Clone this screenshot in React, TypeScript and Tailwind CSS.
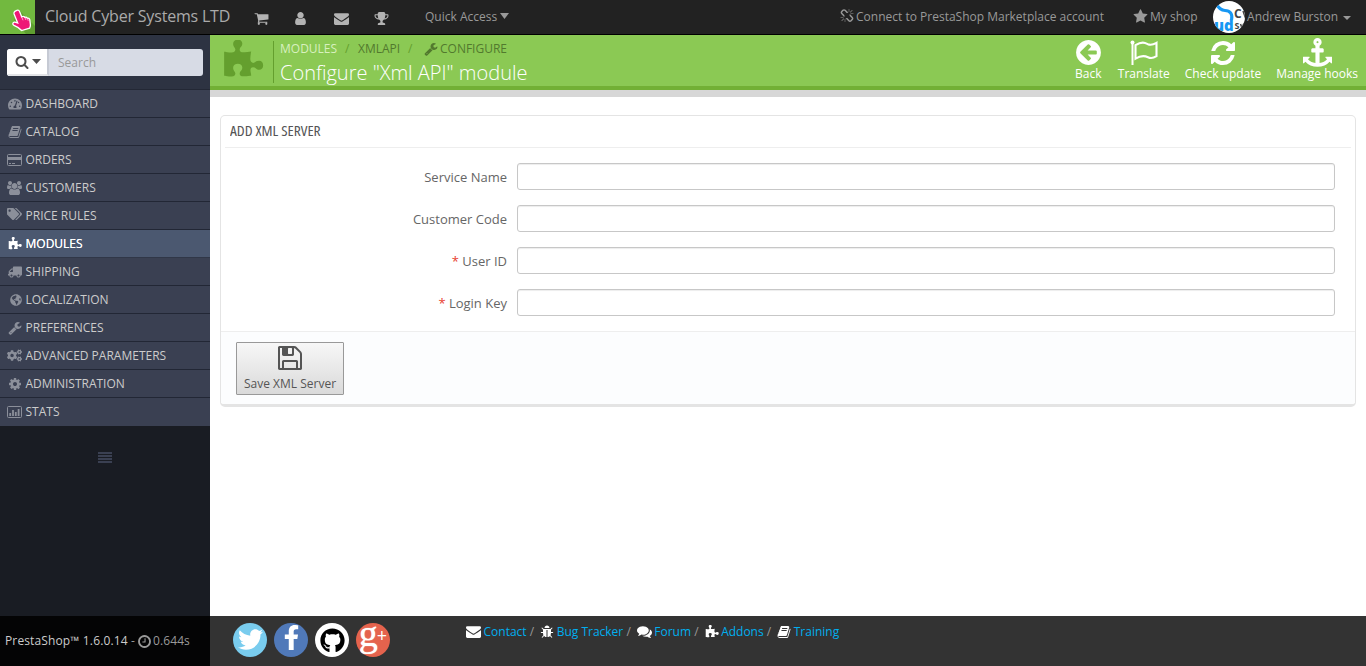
import React from "react";
import { FaCogs, FaFacebookF, FaGithub, FaGlobeAmericas, FaTachometerAlt, FaTags, FaTruck, FaTwitter } from "react-icons/fa";

const PATHS = {
  wrench: "M448 1472q0-26-19-45t-45-19-45 19-19 45 19 45 45 19 45-19 19-45zm644-420l-682 682q-37 37-90 37-52 0-91-37l-106-108q-38-36-38-90 0-53 38-91l681-681q39 98 114.5 173.5t173.5 114.5zm634-435q0 39-23 106-47 134-164.5 217.5t-258.5 83.5q-185 0-316.5-131.5t-131.5-316.5 131.5-316.5 316.5-131.5q58 0 121.5 16.5t107.5 46.5q16 11 16 28t-16 28l-293 169v224l193 107q5-3 79-48.5t135.5-81 70.5-35.5q15 0 23.5 10t8.5 25z",
  cog: "M1152 896q0-106-75-181t-181-75-181 75-75 181 75 181 181 75 181-75 75-181zm512-109v222q0 12-8 23t-20 13l-185 28q-19 54-39 91 35 50 107 138 10 12 10 25t-9 23q-27 37-99 108t-94 71q-12 0-26-9l-138-108q-44 23-91 38-16 136-29 186-7 28-36 28h-222q-14 0-24.5-8.5t-11.5-21.5l-28-184q-49-16-90-37l-141 107q-10 9-25 9-14 0-25-11-126-114-165-168-7-10-7-23 0-12 8-23 15-21 51-66.5t54-70.5q-27-50-41-99l-183-27q-13-2-21-12.5t-8-23.5v-222q0-12 8-23t19-13l186-28q14-46 39-92-40-57-107-138-10-12-10-24 0-10 9-23 26-36 98.5-107.5t94.5-71.5q13 0 26 10l138 107q44-23 91-38 16-136 29-186 7-28 36-28h222q14 0 24.5 8.5t11.5 21.5l28 184q49 16 90 37l142-107q9-9 24-9 13 0 25 10 129 119 165 170 7 8 7 22 0 12-8 23-15 21-51 66.5t-54 70.5q26 50 41 98l183 28q13 2 21 12.5t8 23.5z",
  puzzle: "M1755 1083q0 81-44.5 135t-123.5 54q-41 0-77.5-17.5t-59-38-56.5-38-71-17.5q-110 0-110 124 0 39 16 115t15 115v5q-22 0-33 1-34 3-97.5 11.5t-115.5 13.5-98 5q-61 0-103-26.5t-42-83.5q0-37 17.5-71t38-56.5 38-59 17.5-77.5q0-79-54-123.5t-135-44.5q-84 0-143 45.5t-59 127.5q0 43 15 83t33.5 64.5 33.5 53 15 50.5q0 45-46 89-37 35-117 35-95 0-245-24-9-2-27.5-4t-27.5-4l-13-2q-1 0-3-1-2 0-2-1v-1024q2 1 17.5 3.5t34 5 21.5 3.5q150 24 245 24 80 0 117-35 46-44 46-89 0-22-15-50.5t-33.5-53-33.5-64.5-15-83q0-82 59-127.5t144-45.5q80 0 134 44.5t54 123.5q0 41-17.5 77.5t-38 59-38 56.5-17.5 71q0 57 42 83.5t103 26.5q64 0 180-15t163-17v2q-1 2-3.5 17.5t-5 34-3.5 21.5q-24 150-24 245 0 80 35 117 44 46 89 46 22 0 50.5-15t53-33.5 64.5-33.5 83-15q82 0 127.5 59t45.5 143z",
  cart: "M704 1536q0 52-38 90t-90 38-90-38-38-90 38-90 90-38 90 38 38 90zm896 0q0 52-38 90t-90 38-90-38-38-90 38-90 90-38 90 38 38 90zm128-1088v512q0 24-16.5 42.5t-40.5 21.5l-1044 122q13 60 13 70 0 16-24 64h920q26 0 45 19t19 45-19 45-45 19h-1024q-26 0-45-19t-19-45q0-11 8-31.5t16-36 21.5-40 15.5-29.5l-177-823h-204q-26 0-45-19t-19-45 19-45 45-19h256q16 0 28.5 6.5t19.5 15.5 13 24.5 8 26 5.5 29.5 4.5 26h1201q26 0 45 19t19 45z",
  user: "M1536 1399q0 109-62.5 187t-150.5 78h-854q-88 0-150.5-78t-62.5-187q0-85 8.5-160.5t31.5-152 58.5-131 94-89 134.5-34.5q131 128 313 128t313-128q76 0 134.5 34.5t94 89 58.5 131 31.5 152 8.5 160.5zm-256-887q0 159-112.5 271.5t-271.5 112.5-271.5-112.5-112.5-271.5 112.5-271.5 271.5-112.5 271.5 112.5 112.5 271.5z",
  users: "M593 896q-162 5-265 128h-134q-82 0-138-40.5t-56-118.5q0-353 124-353 6 0 43.5 21t97.5 42.5 119 21.5q67 0 133-23-5 37-5 66 0 139 81 256zm1071 637q0 120-73 189.5t-194 69.5h-874q-121 0-194-69.5t-73-189.500q0-53 3.5-103.5t14-109 26.5-108.5 43-97.5 62-81 85.5-53.5 111.5-20q10 0 43 21.5t73 48 107 48 135 21.5 135-21.500 107-48 73-48 43-21.5q61 0 111.5 20t85.5 53.5 62 81 43 97.5 26.5 108.5 14 109 3.5 103.5zm-1024-1277q0 106-75 181t-181 75-181-75-75-181 75-181 181-75 181 75 75 181zm704 384q0 159-112.5 271.5t-271.5 112.5-271.5-112.5-112.5-271.5 112.5-271.5 271.5-112.5 271.5 112.5 112.5 271.5zm576 225q0 78-56 118.5t-138 40.5h-134q-103-123-265-128 81-117 81-256 0-29-5-66 66 23 133 23 59 0 119-21.5t97.5-42.5 43.5-21q124 0 124 353zm-128-609q0 106-75 181t-181 75-181-75-75-181 75-181 181-75 181 75 75 181z",
  unlink: "M503 1271l-256 256q-10 9-23 9-12 0-23-9-9-10-9-23t9-23l256-256q10-9 23-9t23 9q9 10 9 23t-9 23zm169 41v320q0 14-9 23t-23 9-23-9-9-23v-320q0-14 9-23t23-9 23 9 9 23zm-224-224q0 14-9 23t-23 9h-320q-14 0-23-9t-9-23 9-23 23-9h320q14 0 23 9t9 23zm1264 128q0 120-85 203l-147 146q-83 83-203 83-121 0-204-85l-334-335q-21-21-42-56l239-18 273 274q28 28 68 28t68-27l147-146q28-28 28-67 0-40-28-68l-274-275 18-239q35 21 56 42l336 336q84 86 84 204zm-617-724l-239 18-273-274q-28-28-68-28-39 0-68 27l-147 146q-28 28-28 67 0 40 28 68l274 274-18 240q-35-21-56-42l-336-336q-84-86-84-204 0-120 85-203l147-146q83-83 203-83 121 0 204 85l334 335q21 21 42 56zm633 84q0 14-9 23t-23 9h-320q-14 0-23-9t-9-23 9-23 23-9h320q14 0 23 9t9 23zm-544-544v320q0 14-9 23t-23 9-23-9-9-23v-320q0-14 9-23t23-9 23 9 9 23zm407 151l-256 256q-11 9-23 9t-23-9q-9-10-9-23t9-23l256-256q10-9 23-9t23 9q9 10 9 23t-9 23z",
  bug: "M1696 960q0 26-19 45t-45 19h-224q0 171-67 290l208 209q19 19 19 45t-19 45q-18 19-45 19t-45-19l-198-197q-5 5-15 13t-42 28.5-65 36.5-82 29-97 13v-896h-128v896q-51 0-101.5-13.5t-87-33-66-39-43.5-32.5l-15-14-183 207q-20 21-48 21-24 0-43-16-19-18-20.5-44.5t15.5-46.5l202-227q-58-114-58-274h-224q-26 0-45-19t-19-45 19-45 45-19h224v-294l-173-173q-19-19-19-45t19-45 45-19 45 19l173 173h844l173-173q19-19 45-19t45 19 19 45-19 45l-173 173v294h224q26 0 45 19t19 45zm-480-576h-640q0-133 93.5-226.500t226.5-93.500 226.500 93.500 93.500 226.500z",
  comments: "M1408 768q0 139-94 257t-256.5 186.5-353.500 68.5q-86 0-176-16-124 88-278 128-36 9-86 16h-3q-11 0-20.5-8t-11.5-21q-1-3-1-6.500t.5-6.500 2-6l2.500-5 3.500-5.500 4-5 4.500-5 4-4.500q5-6 23-25t26-29.500 22.500-29 25-38.500 20.500-44q-124-72-195-177t-71-224q0-139 94-257t256.500-186.500 353.500-68.500 353.500 68.500 256.500 186.500 94 257zm384 256q0 120-71 224.500t-195 176.500q10 24 20.500 44t25 38.500 22.500 29 26 29.500 23 25q1 1 4 4.500t4.500 5 4 5 3.500 5.500l2.500 5 2 6 .5 6.500-1 6.500q-3 14-13 22t-22 7q-50-7-86-16-154-40-278-128-90 16-176 16-271 0-472-132 58 4 88 4 161 0 309-45t264-129q125-92 192-212t67-254q0-77-23-152 129 71 204 178t75 230z",
  arrowLeft: "M1408 960v-128q0-26-19-45t-45-19h-502l189-189q19-19 19-45t-19-45l-91-91q-18-18-45-18t-45 18l-362 362-91 91q-18 18-18 45t18 45l91 91 362 362q18 18 45 18t45-18l91-91q18-18 18-45t-18-45l-189-189h502q26 0 45-19t19-45zm256-64q0 209-103 385.5t-279.5 279.5-385.5 103-385.5-103-279.5-279.5-103-385.5 103-385.5 279.5-279.5 385.5-103 385.5 103 279.5 279.5 103 385.5z",
  envelope: "M1792 710v794q0 66-47 113t-113 47h-1472q-66 0-113-47t-47-113v-794q44 49 101 87 362 246 497 345 57 42 92.5 65.5t94.5 48 110 24.5h2q51 0 110-24.5t94.5-48 92.5-65.5q170-123 498-345 57-39 100-87zm0-294q0 79-49 151t-122 123q-376 261-468 325-10 7-42.5 31t-54 38.5-52 32.5-57.5 27-50 9h-2q-23 0-50-9t-57.5-27-52-32.5-54-38.5-42.5-31q-91-64-262-182.5t-205-142.5q-62-42-117-115.5t-55-136.5q0-78 41.5-130t118.5-52h1472q65 0 112.5 47t47.5 113z",
  trophy: "M522 883q-74-162-74-371h-256v96q0 78 94.5 162t235.5 113zm1078-275v-96h-256q0 209-74 371 141-29 235.5-113t94.5-162zm128-128v128q0 71-41.5 143t-112 130-173 97.5-215.5 44.5q-42 54-95 95-38 34-52.5 72.5t-14.5 89.5q0 54 30.5 91t97.5 37q75 0 133.5 45.5t58.5 114.5v64q0 14-9 23t-23 9h-832q-14 0-23-9t-9-23v-64q0-69 58.5-114.5t133.5-45.5q67 0 97.5-37t30.5-91q0-51-14.5-89.5t-52.5-72.5q-53-41-95-95-113-5-215.5-44.5t-173-97.5-112-130-41.5-143v-128q0-40 28-68t68-28h288v-96q0-66 47-113t113-47h576q66 0 113 47t47 113v96h288q40 0 68 28t28 68z",
  star: "M1728 647q0 22-26 48l-363 354 86 500q1 7 1 20 0 21-10.5 35.5t-30.5 14.5q-19 0-40-12l-449-236-449 236q-22 12-40 12-21 0-31.5-14.5t-10.5-35.5q0-6 2-20l86-500-364-354q-25-27-25-48 0-37 56-46l502-73 225-455q19-41 49-41t49 41l225 455 502 73q56 9 56 46z",
  search: "M1216 832q0-185-131.5-316.5t-316.5-131.5-316.5 131.5-131.5 316.5 131.5 316.5 316.5 131.5 316.5-131.5 131.5-316.5zm512 832q0 52-38 90t-90 38q-54 0-90-38l-343-342q-179 124-399 124-143 0-273.5-55.5t-225-150-150-225-55.5-273.5 55.5-273.5 150-225 225-150 273.5-55.5 273.5 55.5 225 150 150 225 55.5 273.5q0 220-124 399l343 343q37 37 37 90z",
  floppy: "M512 1536h768v-384h-768v384zm896 0h128v-896q0-14-10-38.5t-20-34.5l-281-281q-10-10-34-20t-39-10v416q0 40-28 68t-68 28h-576q-40 0-68-28t-28-68v-416h-128v1280h128v-416q0-40 28-68t68-28h832q40 0 68 28t28 68v416zm-384-928v-320q0-13-9.5-22.5t-22.5-9.5h-192q-13 0-22.5 9.5t-9.5 22.5v320q0 13 9.5 22.5t22.5 9.5h192q13 0 22.5-9.5t9.5-22.5zm640 32v928q0 40-28 68t-68 28h-1344q-40 0-68-28t-28-68v-1344q0-40 28-68t68-28h928q40 0 88 20t76 48l280 280q28 28 48 76t20 88z",
  clock: "M1024 544v448q0 14-9 23t-23 9h-320q-14 0-23-9t-9-23v-64q0-14 9-23t23-9h224v-352q0-14 9-23t23-9h64q14 0 23 9t9 23zm416 352q0-148-73-273t-198-198-273-73-273 73-198 198-73 273 73 273 198 198 273 73 273-73 198-198 73-273zm224 0q0 209-103 385.5t-279.5 279.5-385.5 103-385.5-103-279.5-279.5-103-385.5 103-385.5 279.5-279.5 385.5-103 385.5 103 279.5 279.5 103 385.5z",
  refresh: "M1639 1056q0 5-1 7-64 268-268 434.5t-478 166.5q-146 0-282.5-55t-243.5-157l-129 129q-19 19-45 19t-45-19-19-45v-448q0-26 19-45t45-19h448q26 0 45 19t19 45-19 45l-137 137q71 66 161 102t187 36q134 0 250-65t186-179q11-17 53-117 8-23 30-23h192q13 0 22.5 9.5t9.5 22.5zm25-800v448q0 26-19 45t-45 19h-448q-26 0-45-19t-19-45 19-45l138-138q-148-137-349-137-134 0-250 65t-186 179q-11 17-53 117-8 23-30 23h-199q-13 0-22.5-9.5t-9.5-22.5v-7q65-268 270-434.5t480-166.5q146 0 284 55.5t245 156.5l130-129q19-19 45-19t45 19 19 45z",
  anchor: "M960 256q0-26-19-45t-45-19-45 19-19 45 19 45 45 19 45-19 19-45zm832 928v352q0 22-20 30-8 2-12 2-13 0-23-9l-93-93q-119 143-318.5 226.5t-429.5 83.5-429.5-83.5-318.5-226.5l-93 93q-9 9-23 9-4 0-12-2-20-8-20-30v-352q0-14 9-23t23-9h352q22 0 30 20 8 19-7 35l-100 100q67 91 189.5 153.5t271.5 82.5v-647h-192q-26 0-45-19t-19-45v-128q0-26 19-45t45-19h192v-163q-58-34-93-92.5t-35-128.5q0-106 75-181t181-75 181 75 75 181q0 70-35 128.5t-93 92.5v163h192q26 0 45 19t19 45v128q0 26-19 45t-45 19h-192v647q149-20 271.5-82.5t189.5-153.5l-100-100q-15-16-7-35 8-20 30-20h352q14 0 23 9t9 23z",
  book: "M1703 478q40 57 18 129l-275 906q-19 64-76.5 107.5t-122.5 43.5h-923q-77 0-148.5-53.5t-99.5-131.5q-24-67-2-127 0-4 3-27t4-37q1-8-3-21.5t-3-19.5q2-11 8-21t16.5-23.5 16.5-23.5q23-38 45-91.5t30-91.5q3-10 .5-30t-.5-28q3-11 17-28t17-23q21-36 42-92t25-90q1-9-2.5-32t.5-28q4-13 22-30.5t22-22.5q19-26 42.5-84.5t27.5-96.5q1-8-3-25.5t-2-26.5q2-8 9-18t18-23 17-21q8-12 16.5-30.5t15-35 16-36 19.5-32 26.5-23.5 36-11.5 47.5 5.5l-1 3q38-9 51-9h761q74 0 114 56t18 130l-274 906q-36 119-71.5 153.5t-128.5 34.5h-869q-27 0-38 15-11 16-1 43 24 70 144 70h923q29 0 56-15.5t35-41.5l300-987q7-22 5-57 38 15 59 43zm-1064 2q-4 13 2 22.5t20 9.5h608q13 0 25.5-9.5t16.5-22.5l21-64q4-13-2-22.5t-20-9.5h-608q-13 0-25.5 9.5t-16.5 22.5zm-83 256q-4 13 2 22.5t20 9.5h608q13 0 25.5-9.5t16.5-22.5l21-64q4-13-2-22.5t-20-9.5h-608q-13 0-25.5 9.5t-16.5 22.5z",
};

function Glyph({ name, className, wide }: { name: keyof typeof PATHS; className: string; wide?: boolean }) {
  return (
    <svg viewBox={wide ? "0 0 1920 1792" : "0 0 1792 1792"} fill="currentColor" className={`shrink-0 ${className}`}>
      <path d={PATHS[name]} />
    </svg>
  );
}

function Caret({ className }: { className: string }) {
  return (
    <svg viewBox="0 0 10 6" fill="currentColor" preserveAspectRatio="none" className={`shrink-0 ${className}`}>
      <path d="M0 0h10L5 6z" />
    </svg>
  );
}

function CreditCard() {
  return (
    <svg viewBox="0 0 15 12" className="h-3 w-[15px]" fill="none" stroke="currentColor">
      <rect x=".5" y=".5" width="14" height="11" rx="1" />
      <path d="M1 4.500h13" strokeWidth="3" />
      <path d="M2 9.500h2M5 9.500h3" />
    </svg>
  );
}

function BarChart() {
  return (
    <svg viewBox="0 0 15 12" className="h-3 w-[15px]" fill="none" stroke="currentColor">
      <rect x=".5" y=".5" width="14" height="11" rx="1" />
      <path d="M3.200 10V7M6 10V4M8.800 10V6M11.600 10V3" strokeWidth="1.800" />
    </svg>
  );
}

function Flag() {
  return (
    <svg viewBox="0 0 28 26" className="h-[26px] w-7" fill="none" stroke="currentColor">
      <circle cx="2.500" cy="2.600" r="2" fill="currentColor" stroke="none" />
      <path d="M2.500 3v22" strokeWidth="2" />
      <path d="M5.500 5.200C12 1.200 15 2.800 18 4.200C21 5.500 24 4.200 26.500 2.800V16.200C24 17.700 21 18.700 18 17.200C14.500 15.600 11 15.300 5.500 18.600z" strokeWidth="2.100" />
    </svg>
  );
}

function Pointer() {
  return (
    <svg viewBox="0 0 35 34" className="h-[34px] w-[35px]">
      <path d="M20 11L35 26v8H26L14 20z" fill="#5f9f31" />
      <path
        d="M17.200 11.200c1.500-1.200 2.800-.2 3.300 1.200l2 5 .8-.3c1-.3 1.800.1 2.200.8 1.200-.5 2.100 0 2.600.9 1.300-.3 2.200.4 2.500 1.500l.6 5c.1 1.700-.4 2.400-.8 3.500l-8 2.300c-1.500-2-4.700-4-7.600-5.200-2-1-1.300-3.300.8-3.100l2.900.8-3.600-9c-.5-1.500.6-3 2.300-3.400z"
        fill="#ee1877"
        stroke="#fff"
        strokeWidth="1.300"
        transform="translate(-.8 -.6)"
      />
      <path d="M21.700 17l1.300 3.300M24.900 17.300l1 2.700M27.600 18.500l.6 2.300" stroke="#fff" strokeWidth=".6" />
    </svg>
  );
}

function Avatar() {
  return (
    <svg viewBox="0 0 32 32" className="h-8 w-8 shrink-0">
      <defs>
        <clipPath id="avatar-clip"><circle cx="16" cy="16" r="16" /></clipPath>
      </defs>
      <g clipPath="url(#avatar-clip)">
        <rect width="32" height="32" fill="#fff" />
        <path d="M3 3C6 7 8 9.500 12 9.500C17 9.500 20 13 18.500 19" fill="none" stroke="#1797f3" strokeWidth="3" />
        <text x="1" y="30" fill="#1797f3" fontSize="15" fontWeight="800" fontFamily="Open Sans, sans-serif">ud</text>
        <text x="21" y="17" fill="#444" fontSize="12" fontWeight="700" fontFamily="Open Sans, sans-serif">C</text>
        <text x="21.500" y="28" fill="#444" fontSize="9" fontWeight="700" fontFamily="Open Sans, sans-serif">S</text>
        <path d="M30 10l2.500 7M27.500 23l1.500 4 2-5" fill="none" stroke="#444" strokeWidth="1.500" />
      </g>
    </svg>
  );
}

const MENU: { label: string; icon: React.ReactNode; active?: boolean }[] = [
  { label: "DASHBOARD", icon: <FaTachometerAlt className="h-[14px] w-[14px]" /> },
  { label: "CATALOG", icon: <Glyph name="book" className="h-[14px] w-[14px]" /> },
  { label: "ORDERS", icon: <CreditCard /> },
  { label: "CUSTOMERS", icon: <Glyph name="users" wide className="h-[14px] w-[15px]" /> },
  { label: "PRICE RULES", icon: <FaTags className="mb-[3px] h-[14px] w-[15px]" /> },
  { label: "MODULES", icon: <Glyph name="puzzle" className="h-[14px] w-[14px]" />, active: true },
  { label: "SHIPPING", icon: <FaTruck className="h-[14px] w-[14px] -scale-x-100" /> },
  { label: "LOCALIZATION", icon: <FaGlobeAmericas className="h-3 w-3" /> },
  { label: "PREFERENCES", icon: <Glyph name="wrench" className="h-[14px] w-[14px]" /> },
  { label: "ADVANCED PARAMETERS", icon: <FaCogs className="h-[15px] w-[15px]" /> },
  { label: "ADMINISTRATION", icon: <Glyph name="cog" className="h-[14px] w-[14px]" /> },
  { label: "STATS", icon: <BarChart /> },
];

const FIELDS = [
  { label: "Service Name", required: false },
  { label: "Customer Code", required: false },
  { label: "User ID", required: true },
  { label: "Login Key", required: true },
];

function TopBar() {
  return (
    <header className="flex h-[35px] shrink-0 items-center border-b border-black bg-[#222] text-xs text-[#999]">
      <div className="h-[34px] w-[35px] bg-[#72b93f]"><Pointer /></div>
      <div className="ml-[10px] w-[209px] pb-[2px] text-base leading-[31px] tracking-[-0.19px] text-[#aaa]">Cloud Cyber Systems LTD</div>
      <div className="flex w-[171px] pt-[2px] text-[#b3b3b3]">
        <Glyph name="cart" className="h-[15px] w-[15px]" />
        <Glyph name="user" className="ml-6 h-[15px] w-[15px]" />
        <Glyph name="envelope" className="ml-[26px] h-[15px] w-[15px]" />
        <Glyph name="trophy" className="ml-[25px] h-[15px] w-[15px]" />
      </div>
      <div className="flex items-center">
        Quick Access<Caret className="mb-[2px] ml-[3px] h-[6px] w-[9px]" />
      </div>
      <div className="ml-auto flex items-center">
        <Glyph name="unlink" className="mr-[2px] mb-[2px] h-[14px] w-[14px]" />
        <span className="w-[277px]">Connect to PrestaShop Marketplace account</span>
        <Glyph name="star" className="mr-[2px] mb-[2px] h-[15px] w-[15px]" />
        <span className="w-[63px]">My shop</span>
        <Avatar />
        <span className="ml-[2px]">Andrew Burston</span>
        <Caret className="mt-px mr-[15px] ml-[5px] h-1 w-2" />
      </div>
    </header>
  );
}

function Sidebar() {
  return (
    <aside className="flex w-[210px] shrink-0 flex-col bg-[#191c23]">
      <div className="h-[55px] border-b border-[#232835] bg-[#2d3342] px-[7px] pt-[14px]">
        <div className="flex h-[27px] overflow-hidden rounded-[3px] bg-[#d7dbe5] text-xs">
          <div className="flex w-[42px] items-center border-r-2 border-b-2 border-[#e3e4e7] border-r-[#c6cad4] bg-white pl-[8px] text-[#4d4d4d]">
            <Glyph name="search" className="h-[14px] w-[14px]" />
            <Caret className="ml-[3px] h-[5px] w-[9px]" />
          </div>
          <span className="pl-[9px] leading-[27px] text-[#999]">Search</span>
        </div>
      </div>
      <nav>
        {MENU.map((item) => (
          <a
            key={item.label}
            className={`flex h-7 items-center border-b text-xs last:border-[#3a4052] ${item.active ? "border-[#303748] bg-[#4b5870] text-white" : "border-[#222735] bg-[#3a4052] text-[#ccc]"}`}
          >
            <span className={`flex w-[22px] shrink-0 justify-end ${item.active ? "text-white" : "text-[#8b8f9a]"}`}>{item.icon}</span>
            <span className={`ml-[3.500px] whitespace-nowrap ${item.active ? "[text-shadow:0_0_0.5px_#fff]" : ""}`}>{item.label}</span>
          </a>
        ))}
      </nav>
      <div className="mt-[26px] ml-[98px] flex w-[14px] flex-col gap-px">
        {[0, 1, 2, 3].map((n) => <span key={n} className="h-[2px] bg-[#3a4052]" />)}
      </div>
      <div className="mt-auto flex h-[50px] items-center bg-[#040405] pl-[5px] text-xs whitespace-pre text-[#999]">
        <span className="w-[124px] tracking-[0.13px] text-[#ccc]">PrestaShop™ 1.6.0.14</span>
        <span className="w-[8px] pl-[2px]">-</span>
        <Glyph name="clock" className="h-[15px] w-[15px]" />
        <span className="ml-px tracking-[0.1px]">0.644s</span>
      </div>
    </aside>
  );
}

function HeadAction({ label, children, className }: { label: string; children: React.ReactNode; className: string }) {
  return (
    <div className={`flex flex-col items-center whitespace-nowrap ${className}`}>
      <div className="flex h-[28px] items-start">{children}</div>
      <span className="text-xs leading-4">{label}</span>
    </div>
  );
}

function PageHead() {
  return (
    <div className="flex h-[55px] shrink-0 border-b-4 border-[#72b035] bg-[#8bc954] text-white">
      <div className="mt-[6px] h-[42px] w-16 border-r border-[#649f2e] pl-[12px] text-[#649f2e]">
        <Glyph name="puzzle" className="-mt-px h-[42px] w-[42px]" />
      </div>
      <div className="pl-[6px] pt-[6px]">
        <div className="flex h-4 items-center text-xs whitespace-pre text-[#52792e]">
          <span className="w-[65px] text-[#d8f0bf]">MODULES</span>
          <span className="w-[13px] text-[#649f2e]">/</span>
          <span className="w-[50px]">XMLAPI</span>
          <span className="w-[16px] text-[#649f2e]">/</span>
          <Glyph name="wrench" className="h-[14px] w-[14px]" />
          <span className="ml-[2px]">CONFIGURE</span>
        </div>
        <h1 className="text-[20px] leading-[32px] font-light">Configure "Xml API" module</h1>
      </div>
      <div className="ml-auto flex pt-[3px] pr-2">
        <HeadAction label="Back" className="mr-[15px]"><Glyph name="arrowLeft" className="h-[29px] w-[29px]" /></HeadAction>
        <HeadAction label="Translate" className="mr-[15px]"><div className="pt-[2px]"><Flag /></div></HeadAction>
        <HeadAction label="Check update" className="mr-[15px]"><Glyph name="refresh" className="mt-px h-[28px] w-[28px]" /></HeadAction>
        <HeadAction label="Manage hooks" className=""><Glyph name="anchor" className="h-[29px] w-[29px]" /></HeadAction>
      </div>
    </div>
  );
}

function Panel() {
  return (
    <section className="mx-[10px] mt-[18px] h-[292px] rounded-[5px] border border-b-[3px] border-[#e4e4e4] bg-white">
      <h2 className="mx-1 h-8 border-b border-[#eee] pl-[5px] text-sm leading-[30px] text-[#555]">
        <span className="inline-block origin-left scale-x-[1.105] [font-stretch:75%]">ADD XML SERVER</span>
      </h2>
      <div className="flex h-[183px] flex-col gap-[15px] pt-[15px] pr-5">
        {FIELDS.map((field) => (
          <label key={field.label} className="flex h-[27px] items-center text-[13px] text-[#666]">
            <span className="w-[286px] pt-[2px] text-right">
              {field.required && <span className="text-[#e8402f]">* </span>}
              {field.label}
            </span>
            <input className="ml-[10px] h-[27px] flex-1 rounded-[3px] border border-[#c7c7c7] bg-white px-2 shadow-[inset_0_1px_1px_rgba(0,0,0,0.075)]" />
          </label>
        ))}
      </div>
      <div className="h-[73px] rounded-b-[3px] border-t border-[#eee] bg-[#fcfdfe] pt-[10px] pl-[15px]">
        <button className="flex h-[53px] w-[108px] flex-col items-center rounded-[1px] border border-[#999] bg-linear-to-b from-[#f7f7f7] to-[#dadada] text-xs text-[#555]">
          <Glyph name="floppy" className="mt-px h-[28px] w-[28px]" />
          <span className="mt-[3px] leading-[18px] whitespace-nowrap">Save XML Server</span>
        </button>
      </div>
    </section>
  );
}

function FooterLink({ label, icon, last }: { label: string; icon: React.ReactNode; last?: boolean }) {
  return (
    <span className="flex items-center whitespace-pre">
      <span className="mr-[2.500px] mb-px text-white">{icon}</span>
      <a className="text-[#00aff0]">{label}</a>
      {!last && <span className="pr-[6px] text-[#999]"> /</span>}
    </span>
  );
}

function Footer() {
  return (
    <footer className="mt-auto flex h-[50px] bg-[#333] pl-[23px] text-xs">
      <div className="flex w-[233px] gap-[7px] pt-[7px]">
        <span className="flex h-[34px] w-[34px] items-center justify-center rounded-full bg-[#79ccee] text-white"><FaTwitter className="mb-px h-[25px] w-[25px]" /></span>
        <span className="flex h-[34px] w-[34px] justify-center rounded-full bg-[#5079b9] pt-[2px] text-white"><FaFacebookF className="h-[25px] w-[25px]" /></span>
        <span className="flex h-[34px] w-[34px] items-center justify-center rounded-full bg-white text-black"><FaGithub className="h-[25px] w-[25px]" /></span>
        <span className="flex h-[34px] w-[34px] justify-center rounded-full bg-[#e5634d] font-['Liberation_Serif',serif] text-white">
          <span className="text-[38px] leading-[20px] [text-shadow:0_0_1px_#fff]">g</span>
          <span className="-ml-px text-[18px] leading-[27px] font-bold">+</span>
        </span>
      </div>
      <div className="flex h-4 pt-4">
        <div className="flex h-0 items-center">
          <FooterLink label="Contact" icon={<Glyph name="envelope" className="h-[15px] w-[15px]" />} />
          <FooterLink label="Bug Tracker" icon={<Glyph name="bug" className="h-[14px] w-[14px]" />} />
          <FooterLink label="Forum" icon={<Glyph name="comments" className="h-[15px] w-[15px]" />} />
          <FooterLink label="Addons" icon={<Glyph name="puzzle" className="h-[14px] w-[14px]" />} />
          <FooterLink label="Training" icon={<Glyph name="book" className="h-[14px] w-[14px]" />} last />
        </div>
      </div>
    </footer>
  );
}

export default function App() {
  return (
    <div className="flex h-[666px] w-[1366px] flex-col overflow-hidden bg-white font-['Open_Sans',sans-serif]">
      <TopBar />
      <div className="flex min-h-0 flex-1">
        <Sidebar />
        <main className="flex min-w-0 flex-1 flex-col">
          <PageHead />
          <div className="h-[7px] shrink-0 bg-[#d7d7d7]" />
          <Panel />
          <Footer />
        </main>
      </div>
    </div>
  );
}
